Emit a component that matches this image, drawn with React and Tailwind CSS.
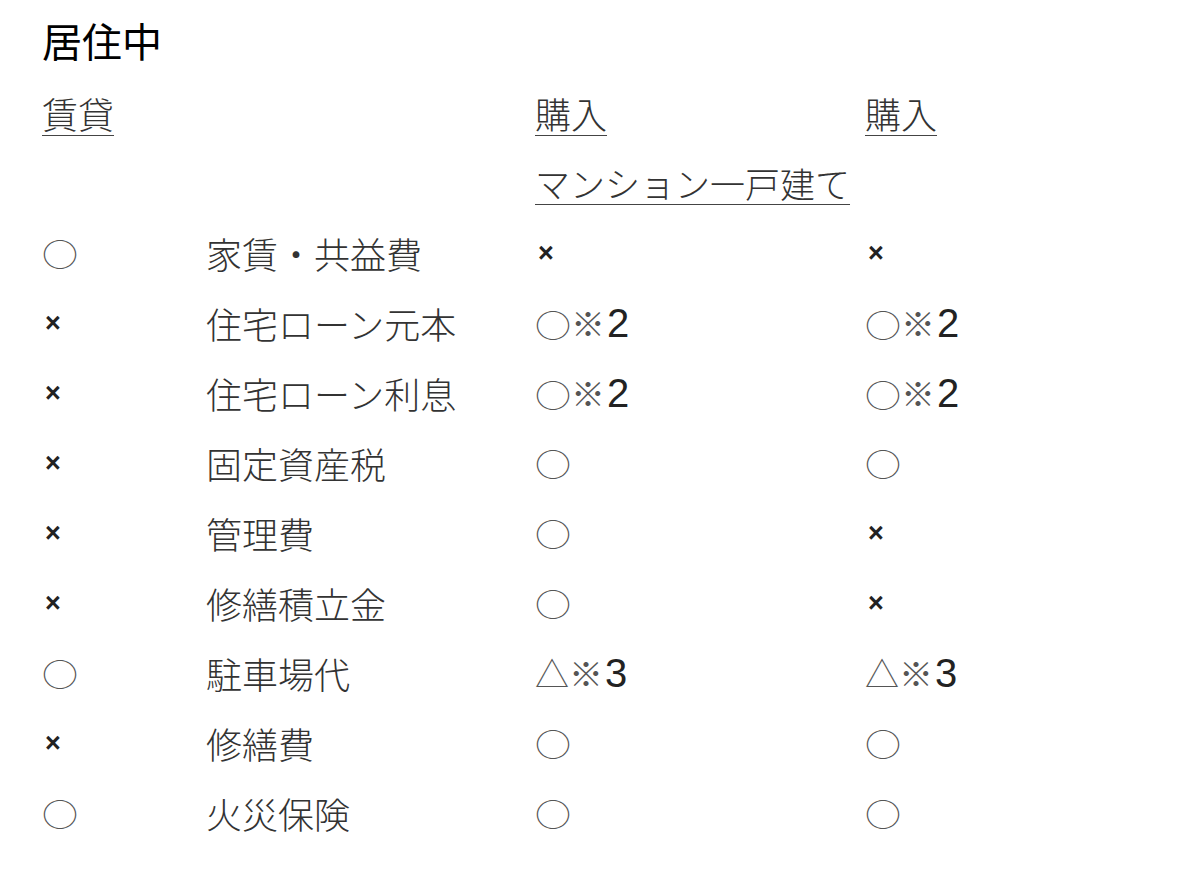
const jp = { fontFamily: '"Noto Sans CJK JP", sans-serif' }
const mix = { fontFamily: '"Liberation Sans", "Noto Sans CJK JP", sans-serif' }

const ROWS = [
  ['○', '家賃・共益費', '×', '×'],
  ['×', '住宅ローン元本', '○※2', '○※2'],
  ['×', '住宅ローン利息', '○※2', '○※2'],
  ['×', '固定資産税', '○', '○'],
  ['×', '管理費', '○', '×'],
  ['×', '修繕積立金', '○', '×'],
  ['○', '駐車場代', '△※3', '△※3'],
  ['×', '修繕費', '○', '○'],
  ['○', '火災保険', '○', '○'],
]

function Mark({ v }) {
  if (v === '×') {
    return <span className="text-[27px] font-bold text-[#222] pl-[3px]" style={mix}>×</span>
  }
  return (
    <span className="inline-flex items-center text-[#555]" style={jp}>
      {v.split('').map((c, i) => {
        if (/[0-9]/.test(c)) return <span key={i} className="text-[40px] leading-none text-[#222] ml-[2px]" style={mix}>{c}</span>
        if (c === '○') return <span key={i} className="inline-block text-[36px] leading-none font-light scale-y-[0.85]">{c}</span>
        return <span key={i} className="text-[34px] leading-none font-light">{c}</span>
      })}
    </span>
  )
}

const head = 'underline underline-offset-[6px] decoration-1 decoration-[#444]'

export default function App() {
  return (
    <div className="w-[1200px] h-[891px] bg-white pl-[42px] pt-[14px]">
      <h1 className="text-[40px] leading-[52px] font-normal text-black" style={jp}>居住中</h1>

      <div className="grid grid-cols-[164px_329px_330px_1fr] auto-rows-[70px] items-center mt-[12px] text-[#333]" style={jp}>
        <div className="text-[36px] font-light"><span className={head}>賃貸</span></div>
        <div />
        <div className="text-[36px] font-light"><span className={head}>購入</span></div>
        <div className="text-[36px] font-light"><span className={head}>購入</span></div>

        <div />
        <div />
        <div className="col-span-2 text-[35px] font-light"><span className={head}>マンション一戸建て</span></div>

        {ROWS.map((r, i) => (
          <div key={i} className="contents">
            <div><Mark v={r[0]} /></div>
            <div className="text-[36px] font-light">{r[1]}</div>
            <div><Mark v={r[2]} /></div>
            <div><Mark v={r[3]} /></div>
          </div>
        ))}
      </div>
    </div>
  )
}
